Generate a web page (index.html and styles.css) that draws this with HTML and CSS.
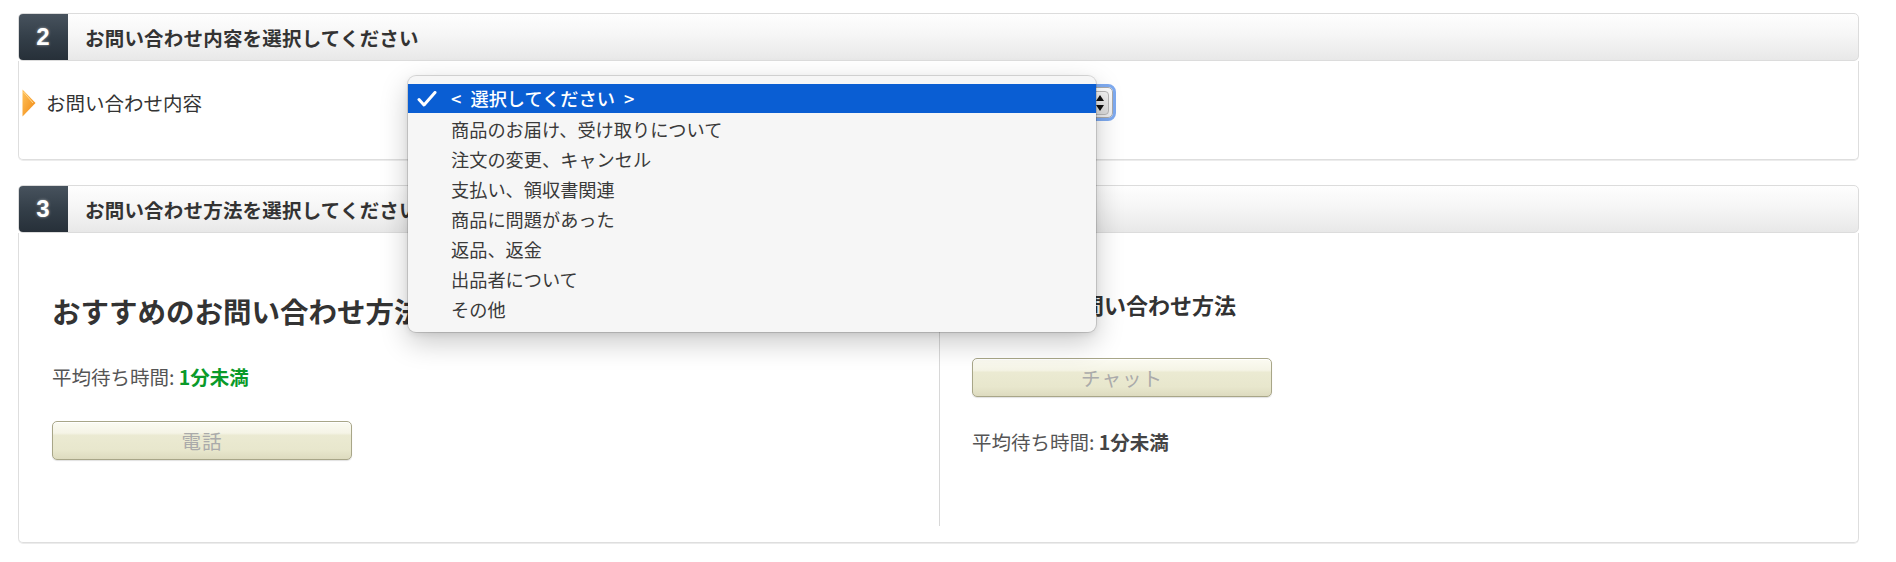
FILE: index.html
```html
<!DOCTYPE html>
<html lang="ja">
<head>
<meta charset="utf-8">
<title>お問い合わせ</title>
<link rel="stylesheet" href="styles.css">
</head>
<body>
<div class="page">
  <section class="step">
    <header class="step-head">
      <span class="step-num">2</span>
      <h2 class="step-title">お問い合わせ内容を選択してください</h2>
    </header>
    <div class="step-body step-body--form">
      <div class="field">
        <div class="field-label">
          <svg class="field-arrow" width="14" height="28" viewBox="0 0 14 28">
            <defs>
              <linearGradient id="ag" x1="0" y1="0" x2="1" y2="1">
                <stop offset="0" stop-color="#ffc35c"/>
                <stop offset="1" stop-color="#f0860f"/>
              </linearGradient>
            </defs>
            <polygon points="0.5,0.5 13.5,14 0.5,27.5" fill="url(#ag)"/>
            <polyline points="1.5,3 11,14" fill="none" stroke="#ffd890" stroke-width="1"/>
          </svg>
          <span>お問い合わせ内容</span>
        </div>
        <div class="select-wrap">
          <div class="select">
            <span class="select-arrows">
              <svg width="10" height="18" viewBox="0 0 10 18"><polygon points="5,1 9,7 1,7" fill="#111"/><polygon points="1,11 9,11 5,17" fill="#111"/></svg>
            </span>
          </div>
          <ul class="menu">
            <li class="menu-item is-selected">
              <svg class="menu-check" width="20" height="16" viewBox="0 0 20 16"><polyline points="2,8.5 7,14 18,1.5" fill="none" stroke="#fff" stroke-width="3" stroke-linecap="round" stroke-linejoin="round"/></svg>
              &lt;&ensp;選択してください&ensp;&gt;
            </li>
            <li class="menu-item">商品のお届け、受け取りについて</li>
            <li class="menu-item">注文の変更、キャンセル</li>
            <li class="menu-item">支払い、領収書関連</li>
            <li class="menu-item">商品に問題があった</li>
            <li class="menu-item">返品、返金</li>
            <li class="menu-item">出品者について</li>
            <li class="menu-item">その他</li>
          </ul>
        </div>
      </div>
    </div>
  </section>

  <section class="step">
    <header class="step-head">
      <span class="step-num">3</span>
      <h2 class="step-title">お問い合わせ方法を選択してください</h2>
    </header>
    <div class="step-body step-body--methods">
      <div class="method method--main">
        <h3 class="method-title method-title--main">おすすめのお問い合わせ方法</h3>
        <p class="wait wait--main">平均待ち時間: <b class="wait-time wait-time--ok">1分未満</b></p>
        <button class="btn btn--main" type="button">電話</button>
      </div>
      <div class="method method--other">
        <h3 class="method-title method-title--other">その他のお問い合わせ方法</h3>
        <button class="btn btn--other" type="button">チャット</button>
        <p class="wait wait--other">平均待ち時間: <b class="wait-time">1分未満</b></p>
      </div>
    </div>
  </section>
</div>
</body>
</html>
```

FILE: styles.css
```css
* { box-sizing: border-box; }

html, body {
  margin: 0;
  padding: 0;
  background: #fff;
}

body {
  font-family: "Noto Sans CJK JP", "Noto Sans", sans-serif;
  color: #333;
  width: 1896px;
  height: 562px;
  overflow: hidden;
}

.page {
  width: 1841px;
  margin-left: 18px;
  padding-top: 13px;
  display: flex;
  flex-direction: column;
  gap: 25px;
}

.step-head {
  display: flex;
  align-items: stretch;
  height: 48px;
  border: 1px solid #dcdcdc;
  border-radius: 5px;
  background: linear-gradient(#fefefe 0%, #f6f6f6 45%, #e8e8e8 100%);
  overflow: hidden;
}

.step-num {
  width: 50px;
  margin: -1px 0 -1px -1px;
  display: flex;
  align-items: center;
  justify-content: center;
  background: linear-gradient(#48535e 0%, #343f49 50%, #262f38 100%);
  border-radius: 5px 0 0 5px;
  color: #fff;
  font-family: "Liberation Sans", Arial, sans-serif;
  font-weight: bold;
  font-size: 24px;
  text-shadow: 0 0 3px rgba(255,255,255,0.55);
}

.step-title {
  margin: 0;
  padding-left: 17px;
  display: flex;
  align-items: center;
  font-size: 19.5px;
  font-weight: bold;
  color: #333;
  letter-spacing: 0.2px;
}

.step-body {
  border: 1px solid #dedede;
  border-top: none;
  border-radius: 0 0 5px 5px;
  box-shadow: 0 1px 0 #ececec;
}

.step-body--form {
  padding: 26px 0 41px;
}

.field {
  display: flex;
  align-items: center;
  height: 31px;
}

.field-label {
  width: 401px;
  padding-left: 3px;
  display: flex;
  align-items: center;
  gap: 10px;
  font-size: 19.5px;
  color: #333;
}

.field-arrow { display: block; flex: none; }

.select-wrap {
  position: relative;
  width: 693px;
  height: 31px;
}

.select {
  height: 31px;
  border: 1px solid #a9a9a9;
  border-radius: 5px;
  background: linear-gradient(#fdfdfd, #ececec);
  outline: 3px solid #7eaaf0;
  outline-offset: 0;
  display: flex;
  align-items: center;
  justify-content: flex-end;
  padding: 0 3px;
}

.select-arrows {
  width: 18px;
  height: 24px;
  border-radius: 4px;
  background: linear-gradient(#f4f4f4, #dcdcdc);
  border: 1px solid #b8b8b8;
  display: flex;
  align-items: center;
  justify-content: center;
}

.select-arrows svg { display: block; }

.menu {
  position: absolute;
  left: -12px;
  top: -11px;
  width: 688px;
  margin: 0;
  padding: 8px 0;
  list-style: none;
  background: #f6f6f6;
  border-radius: 8px;
  box-shadow: 0 0 0 1px rgba(0,0,0,0.13), 0 10px 28px rgba(0,0,0,0.22), 0 2px 6px rgba(0,0,0,0.08);
  z-index: 10;
}

.menu-item {
  position: relative;
  height: 30px;
  line-height: 30px;
  padding-left: 43px;
  font-size: 18.2px;
  color: #3a3a3a;
  white-space: nowrap;
}

.menu-item.is-selected {
  background: #0a5ed3;
  color: #fff;
  font-weight: 500;
  height: 29px;
  line-height: 29px;
  margin-bottom: 1px;
}

.menu-check {
  position: absolute;
  left: 9px;
  top: 7px;
}

.step-body--methods {
  display: grid;
  grid-template-columns: 920px 1fr;
  padding: 16px 0;
  height: 310px;
}

.method {
  display: flex;
  flex-direction: column;
  align-items: flex-start;
}

.method--main { padding-left: 33px; }

.method--other {
  border-left: 1px solid #d8d8d8;
  padding-left: 32px;
}

.method-title {
  margin: 0;
  font-weight: bold;
  color: #333;
}

.method-title--main {
  font-size: 28.5px;
  line-height: 38px;
  margin-top: 43px;
}

.method-title--other {
  font-size: 22px;
  line-height: 30px;
  margin-top: 40px;
}

.wait {
  margin: 0;
  font-size: 19.5px;
  line-height: 26px;
  color: #555;
}

.wait--main { margin-top: 34px; }
.wait--other { margin-top: 32px; }

.wait-time {
  font-weight: bold;
  color: #444;
}

.wait-time--ok { color: #0a9a2a; }

.btn {
  width: 300px;
  height: 39px;
  border: 1px solid #a8a688;
  border-radius: 5px;
  background: linear-gradient(#fbfbf2 0%, #f5f4e6 30%, #ebead2 36%, #e8e7cd 75%, #dddbbf 100%);
  box-shadow: inset 0 1px 0 #fff, 0 1px 1px rgba(0,0,0,0.12);
  font-family: "Noto Sans CJK JP", sans-serif;
  font-size: 19.5px;
  color: #aaa;
  letter-spacing: 1px;
  padding: 0;
}

.btn--main { margin-top: 31px; }
.btn--other { margin-top: 39px; }
```
